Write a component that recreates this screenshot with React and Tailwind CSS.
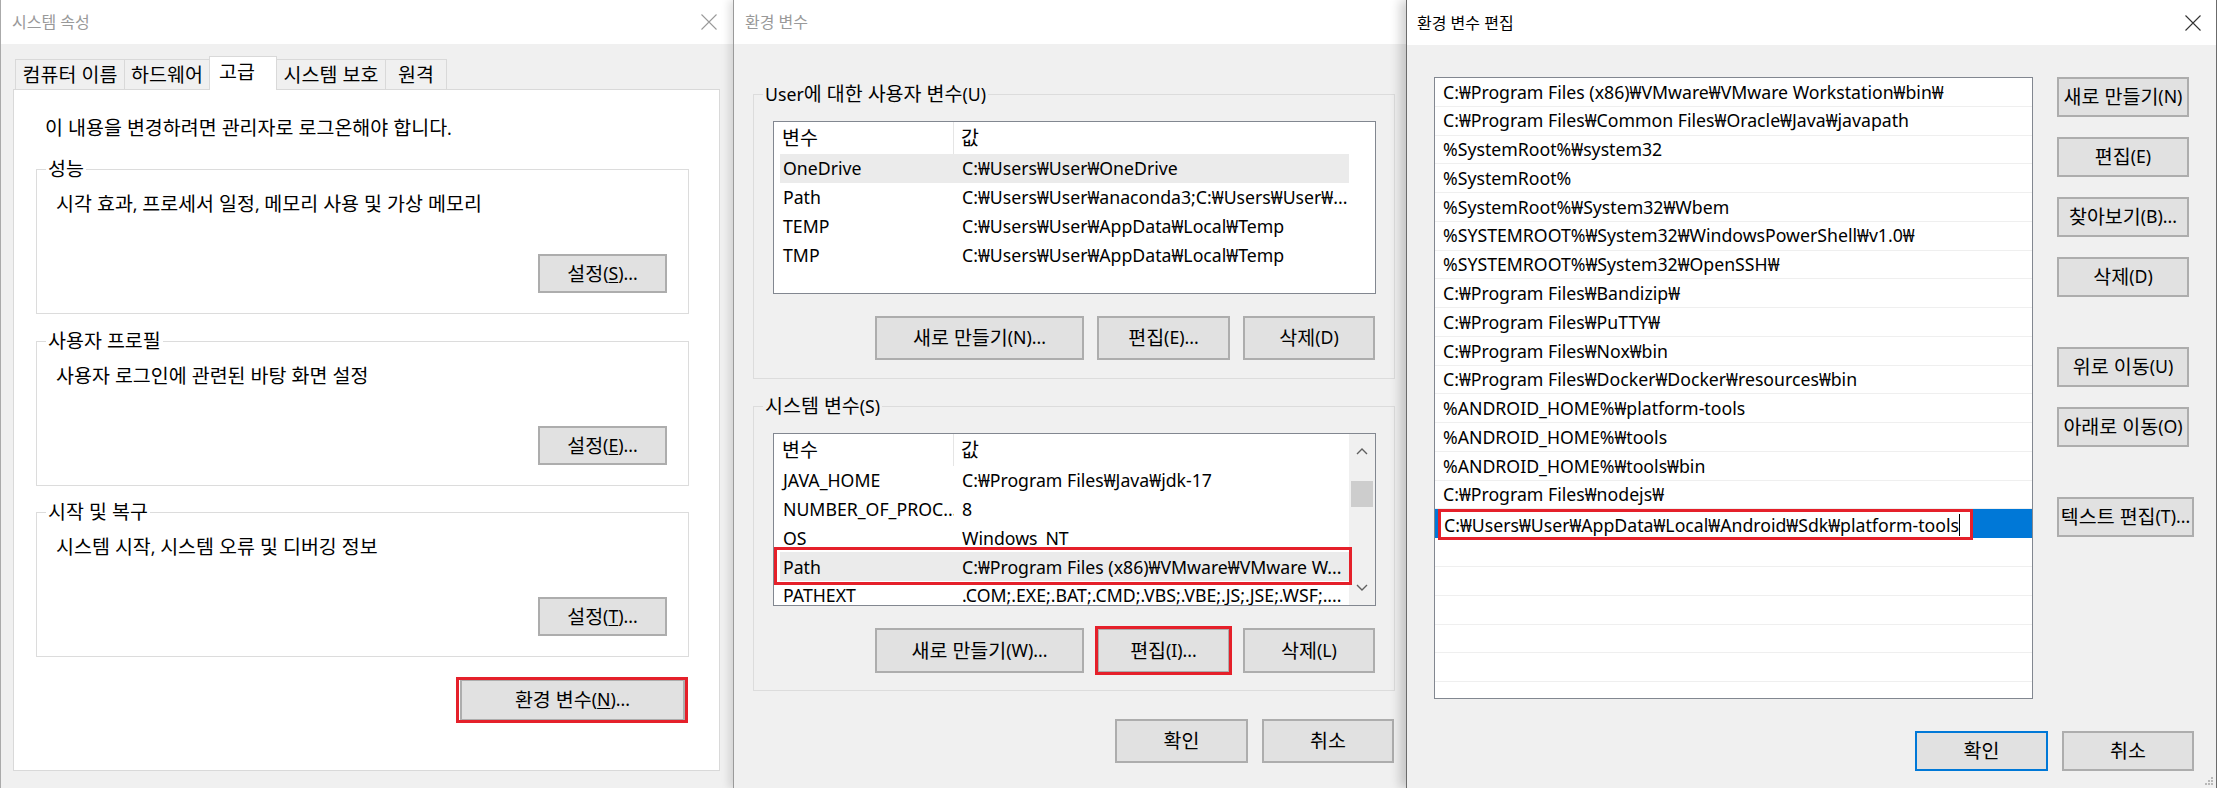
import React from 'react';

const F = "font-['Noto_Sans','Noto_Sans_CJK_KR',sans-serif]";

// Hangul runs are set a little larger than the latin text, as in the original font
const HANGUL = /([\uAC00-\uD7A3]+(?: +[\uAC00-\uD7A3]+)*)/;
function T({ children }) {
  return children.split(HANGUL).map((p, i) =>
    i % 2 === 1 ? <span key={i} className="text-[19.5px]">{p}</span> : p
  );
}

function CloseX({ color }) {
  return (
    <svg width="16" height="16" viewBox="0 0 16 16">
      <path d="M0.5 0.5L15.5 15.5M15.5 0.5L0.5 15.5" stroke={color} strokeWidth="1.1" fill="none" />
    </svg>
  );
}

function Btn({ className = '', children }) {
  return (
    <div className={`flex items-center justify-center bg-[#e1e1e1] border-2 border-[#adadad] leading-none whitespace-nowrap ${className}`}>
      {typeof children === 'string' ? <T>{children}</T> : children}
    </div>
  );
}

function U({ children }) {
  return <span className="underline underline-offset-2">{children}</span>;
}

// ---------- 시스템 속성 ----------
function Group({ label, text, btn }) {
  return (
    <div className="relative w-[653px] h-[145px] border border-[#dcdcdc] flex flex-col">
      <span className="absolute left-[9px] -top-[13px] bg-white px-[2px] leading-[24px]"><T>{label}</T></span>
      <div className="pl-[19px] pt-[22px] leading-[24px]"><T>{text}</T></div>
      <Btn className="mt-auto self-end mr-[21px] mb-[20px] w-[129px] h-[39px]">
        <T>설정</T>(<U>{btn}</U>)...
      </Btn>
    </div>
  );
}

function SystemProps() {
  return (
    <div className="w-[733px] shrink-0 flex flex-col border-l border-[#aaaaaa]">
      <div className="h-[44px] bg-white flex items-center justify-between pl-[11px] pr-[16px]">
        <span className="text-[16px] text-[#999999]">시스템 속성</span>
        <CloseX color="#9a9a9a" />
      </div>
      <div className="flex-1 bg-[#f0f0f0] pt-[12px]">
        <div className="relative z-10 flex items-end h-[33px] ml-[14px] text-[19.5px]">
          <div className="w-[109px] h-[30px] border-t border-l border-[#d9d9d9] flex items-center justify-center">컴퓨터 이름</div>
          <div className="w-[85px] h-[30px] border-t border-l border-[#d9d9d9] flex items-center justify-center">하드웨어</div>
          <div className="w-[68px] h-[34px] -mb-px border-t border-l border-r border-[#d9d9d9] bg-white flex items-center pl-[9px] pb-[3px]">고급</div>
          <div className="w-[108px] h-[30px] border-t border-[#d9d9d9] flex items-center justify-center">시스템 보호</div>
          <div className="w-[62px] h-[30px] border-t border-l border-r border-[#d9d9d9] flex items-center justify-center">원격</div>
        </div>
        <div className="ml-[12px] w-[707px] h-[682px] border border-[#d9d9d9] bg-white flex flex-col items-start pl-[22px]">
          <div className="mt-[26px] ml-[9px] leading-[24px]"><T>이 내용을 변경하려면 관리자로 로그온해야 합니다.</T></div>
          <div className="mt-[29px]">
            <Group label="성능" text="시각 효과, 프로세서 일정, 메모리 사용 및 가상 메모리" btn="S" />
          </div>
          <div className="mt-[27px]">
            <Group label="사용자 프로필" text="사용자 로그인에 관련된 바탕 화면 설정" btn="E" />
          </div>
          <div className="mt-[26px]">
            <Group label="시작 및 복구" text="시스템 시작, 시스템 오류 및 디버깅 정보" btn="T" />
          </div>
          <div className="relative mt-[22px] ml-[424px]">
            <Btn className="w-[225px] h-[42px]"><T>환경 변수</T>(<U>N</U>)...</Btn>
            <div className="absolute -left-[4px] -right-[3px] -top-[2px] -bottom-[2px] border-[3px] border-[#e5202a]" />
          </div>
        </div>
      </div>
    </div>
  );
}

// ---------- 환경 변수 ----------
function Chevron({ up }) {
  return (
    <svg width="12" height="8" viewBox="0 0 12 8">
      <polyline points={up ? '1,7 6,2 11,7' : '1,1 6,6 11,1'} stroke="#606060" strokeWidth="1.4" fill="none" />
    </svg>
  );
}

function VarList({ rows, selected, red, scroll }) {
  return (
    <div className="ml-[19px] mt-[26px] w-[603px] h-[173px] border border-[#828790] bg-white flex overflow-hidden">
      <div className="w-[575px] shrink-0 flex flex-col">
        <div className="h-[32px] shrink-0 flex text-[19.5px]">
          <div className="w-[180px] shrink-0 pl-[8px] flex items-center border-r border-[#e5e5e5]">변수</div>
          <div className="pl-[7px] flex items-center">값</div>
        </div>
        {rows.map(([k, v]) => (
          <div key={k} className={`relative shrink-0 ml-[6px] h-[28.8px] flex items-center whitespace-nowrap ${k === selected ? 'bg-[#ebebeb]' : ''}`}>
            <div className="w-[174px] shrink-0 pl-[3px] overflow-hidden">{k}</div>
            <div className="pl-[8px]">{v}</div>
            {k === red && <div className="absolute z-10 -top-[5px] -bottom-[4px] -left-[6px] -right-[3px] border-[3px] border-[#e5202a]" />}
          </div>
        ))}
      </div>
      {scroll ? (
        <div className="w-[26px] bg-[#f0f0f0] flex flex-col items-center">
          <div className="h-[32px] shrink-0 flex items-center justify-center pt-[2px]"><Chevron up /></div>
          <div className="mt-[15px] w-[22px] h-[26px] bg-[#cdcdcd]" />
          <div className="mt-auto h-[30px] flex items-center justify-center pb-[4px]"><Chevron /></div>
        </div>
      ) : (
        <div className="flex-1 bg-white" />
      )}
    </div>
  );
}

function EnvVars() {
  const user = [
    ['OneDrive', 'C:₩Users₩User₩OneDrive'],
    ['Path', 'C:₩Users₩User₩anaconda3;C:₩Users₩User₩...'],
    ['TEMP', 'C:₩Users₩User₩AppData₩Local₩Temp'],
    ['TMP', 'C:₩Users₩User₩AppData₩Local₩Temp'],
  ];
  const sys = [
    ['JAVA_HOME', 'C:₩Program Files₩Java₩jdk-17'],
    ['NUMBER_OF_PROC...', '8'],
    ['OS', 'Windows_NT'],
    ['Path', 'C:₩Program Files (x86)₩VMware₩VMware W...'],
    ['PATHEXT', '.COM;.EXE;.BAT;.CMD;.VBS;.VBE;.JS;.JSE;.WSF;....'],
  ];
  return (
    <div className="relative z-10 w-[673px] shrink-0 flex flex-col border-l border-[#9a9a9a] shadow-[-4px_0_8px_rgba(0,0,0,0.12)]">
      <div className="h-[44px] bg-white flex items-center pl-[11px]">
        <span className="text-[16px] text-[#999999]">환경 변수</span>
      </div>
      <div className="flex-1 bg-[#f0f0f0] pl-[19px] pt-[50px]">
        <div className="relative w-[642px] h-[285px] border border-[#dcdcdc] flex flex-col">
          <span className="absolute left-[9px] -top-[13px] bg-[#f0f0f0] px-[2px] leading-[24px]"><T>User에 대한 사용자 변수(U)</T></span>
          <VarList rows={user} selected="OneDrive" />
          <div className="mt-[22px] flex justify-end gap-[13px] pr-[19px]">
            <Btn className="w-[209px] h-[44px]">새로 만들기(N)...</Btn>
            <Btn className="w-[133px] h-[44px]">편집(E)...</Btn>
            <Btn className="w-[132px] h-[44px]">삭제(D)</Btn>
          </div>
        </div>
        <div className="relative mt-[27px] w-[642px] h-[285px] border border-[#dcdcdc] flex flex-col">
          <span className="absolute left-[9px] -top-[13px] bg-[#f0f0f0] px-[2px] leading-[24px]"><T>시스템 변수(S)</T></span>
          <VarList rows={sys} selected="Path" red="Path" scroll />
          <div className="mt-[22px] flex justify-end gap-[13px] pr-[19px]">
            <Btn className="w-[209px] h-[45px]">새로 만들기(W)...</Btn>
            <div className="relative">
              <Btn className="w-[133px] h-[45px]">편집(I)...</Btn>
              <div className="absolute -inset-[2px] border-[3px] border-[#e5202a]" />
            </div>
            <Btn className="w-[132px] h-[45px]">삭제(L)</Btn>
          </div>
        </div>
        <div className="mt-[28px] w-[642px] flex justify-end gap-[14px] pr-[1px]">
          <Btn className="w-[133px] h-[44px]">확인</Btn>
          <Btn className="w-[132px] h-[44px]">취소</Btn>
        </div>
      </div>
    </div>
  );
}

// ---------- 환경 변수 편집 ----------
function EditEnv() {
  const paths = [
    'C:₩Program Files (x86)₩VMware₩VMware Workstation₩bin₩',
    'C:₩Program Files₩Common Files₩Oracle₩Java₩javapath',
    '%SystemRoot%₩system32',
    '%SystemRoot%',
    '%SystemRoot%₩System32₩Wbem',
    '%SYSTEMROOT%₩System32₩WindowsPowerShell₩v1.0₩',
    '%SYSTEMROOT%₩System32₩OpenSSH₩',
    'C:₩Program Files₩Bandizip₩',
    'C:₩Program Files₩PuTTY₩',
    'C:₩Program Files₩Nox₩bin',
    'C:₩Program Files₩Docker₩Docker₩resources₩bin',
    '%ANDROID_HOME%₩platform-tools',
    '%ANDROID_HOME%₩tools',
    '%ANDROID_HOME%₩tools₩bin',
    'C:₩Program Files₩nodejs₩',
  ];
  const empty = [1, 2, 3, 4, 5, 6];
  return (
    <div className="relative z-20 w-[811px] shrink-0 flex flex-col border-l border-r border-[#6b6b6b] shadow-[-6px_0_10px_rgba(0,0,0,0.18)]">
      <div className="h-[45px] bg-white flex items-center justify-between pl-[10px] pr-[15px]">
        <span className="text-[16px] text-black">환경 변수 편집</span>
        <CloseX color="#333333" />
      </div>
      <div className="relative flex-1 bg-[#f0f0f0] pt-[32px] pl-[27px] pr-[22px]">
        <div className="flex items-start">
          <div className="w-[604px] h-[622px] border border-[#828790] bg-white overflow-hidden flex flex-col">
            {paths.map((p) => (
              <div key={p} className="shrink-0 h-[28.77px] border-b border-[#efefef] flex items-center pl-[8px] whitespace-nowrap">{p}</div>
            ))}
            <div className="shrink-0 h-[28.77px] bg-[#0078d7]">
              <div className="ml-[3px] w-[535px] h-[31px] bg-white border-[3px] border-[#e5202a] flex items-center pl-[3px] whitespace-nowrap">
                C:₩Users₩User₩AppData₩Local₩Android₩Sdk₩platform-tools
                <span className="inline-block w-px h-[22px] bg-black" />
              </div>
            </div>
            {empty.map((i) => (
              <div key={i} className="shrink-0 h-[28.77px] border-b border-[#efefef]" />
            ))}
          </div>
          <div className="ml-[24px] flex flex-col">
            <Btn className="w-[132px] h-[40px]">새로 만들기(N)</Btn>
            <Btn className="mt-[20px] w-[132px] h-[40px]">편집(E)</Btn>
            <Btn className="mt-[20px] w-[132px] h-[40px]">찾아보기(B)...</Btn>
            <Btn className="mt-[20px] w-[132px] h-[40px]">삭제(D)</Btn>
            <Btn className="mt-[50px] w-[132px] h-[40px]">위로 이동(U)</Btn>
            <Btn className="mt-[20px] w-[132px] h-[40px]">아래로 이동(O)</Btn>
            <Btn className="mt-[50px] w-[137px] h-[40px]">텍스트 편집(T)...</Btn>
          </div>
        </div>
        <div className="mt-[32px] flex justify-end gap-[14px]">
          <Btn className="w-[133px] h-[40px] !border-[#0078d7]">확인</Btn>
          <Btn className="w-[132px] h-[40px]">취소</Btn>
        </div>
        <svg className="absolute right-[2px] bottom-[2px]" width="10" height="10" viewBox="0 0 10 10">
          <rect x="7" y="1" width="2" height="2" fill="#b8b8b8" />
          <rect x="4" y="4" width="2" height="2" fill="#b8b8b8" />
          <rect x="7" y="4" width="2" height="2" fill="#b8b8b8" />
          <rect x="1" y="7" width="2" height="2" fill="#b8b8b8" />
          <rect x="4" y="7" width="2" height="2" fill="#b8b8b8" />
          <rect x="7" y="7" width="2" height="2" fill="#b8b8b8" />
        </svg>
      </div>
    </div>
  );
}

export default function App() {
  return (
    <div className={`${F} w-[2217px] h-[788px] overflow-hidden flex text-[17.7px] text-black bg-[#f0f0f0]`}>
      <SystemProps />
      <EnvVars />
      <EditEnv />
    </div>
  );
}
